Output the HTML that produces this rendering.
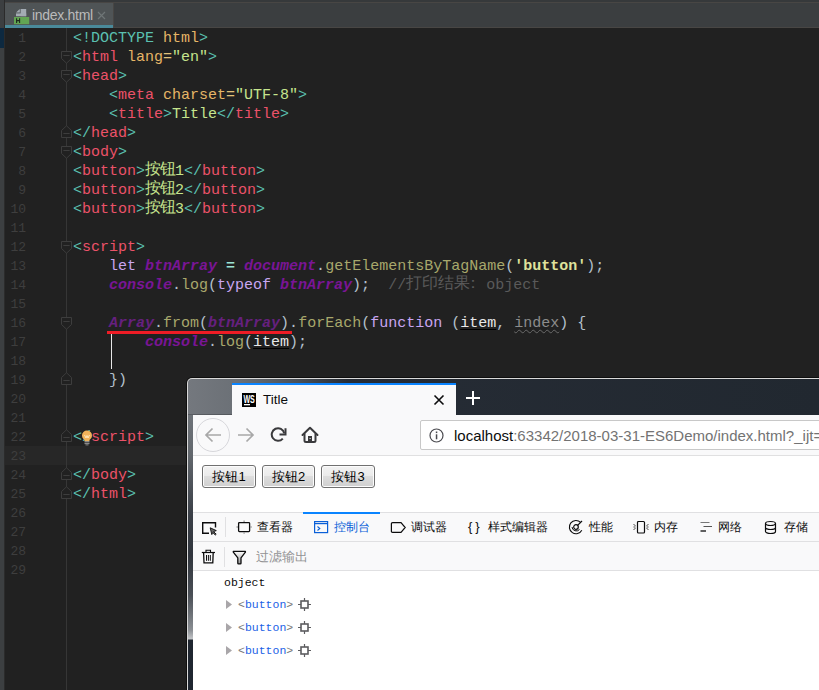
<!DOCTYPE html>
<html><head><meta charset="utf-8">
<style>
*{margin:0;padding:0;box-sizing:border-box}
html,body{width:819px;height:690px;overflow:hidden;background:#212121;font-family:"Liberation Sans",sans-serif;position:relative}
.abs{position:absolute}
#topbar{left:0;top:0;width:819px;height:28px;background:#3b3e40}
#topstrip{left:0;top:0;width:819px;height:2px;background:#36393b}
#topline{left:0;top:2px;width:819px;height:1px;background:#484644}
#tab{left:5px;top:3px;width:109px;height:25px;background:#4f5456;border-right:1px solid #484644}
#tabul{left:5px;top:25px;width:108px;height:3px;background:#4a8a9a}
#tabbot{left:114px;top:27px;width:705px;height:1px;background:#484644}
#tabtxt{left:32px;top:7px;font-size:14px;letter-spacing:-0.3px;color:#bbbbbb;line-height:17px}
#leftstrip{left:0;top:0;width:5px;height:690px;background:#3c3f41;border-right:1px solid #2b2b2b}
#leftblue{left:0;top:28px;width:4px;height:20px;background:#0d2940}
#curline{left:5px;top:446px;width:814px;height:19px;background:#272727}
#foldline{left:66px;top:28px;width:1px;height:662px;background:#363636}
.ln{position:absolute;left:5px;width:21px;text-align:right;font-family:"Liberation Mono",monospace;font-size:13px;color:#3e3e3e;line-height:19px}
.cl{position:absolute;left:73px;font-family:"Liberation Mono",monospace;font-size:15px;line-height:19px;white-space:pre;color:#c8d0d8}
.b{color:#5bc0b0}.t{color:#ec5269}.a{color:#e5b567}.v{color:#c6e58e}.e{color:#e2c27a}
.k{color:#c9a6f2}.g{color:#7a1596;font-weight:bold;font-style:italic}.g2{color:#66207f;font-weight:bold;font-style:italic}.m{color:#a8a86c}.p{color:#b4c0cc}
.s{color:#dfe39c;font-weight:bold}.c{color:#5a5a5a}.q{color:#9de4d4;font-weight:bold}
.it{color:#e8e8e8;text-decoration:underline;text-decoration-color:#000;text-underline-offset:2px}
.ix{color:#8c8c8c;text-decoration:underline wavy #6a6a6a;text-underline-offset:2px;text-decoration-thickness:1px}
.cj{display:inline-block;text-align:left;vertical-align:top;height:19px;line-height:19px;position:relative;top:-1px;font-size:15.5px}
/* browser */
#winblack{left:186px;top:377px;width:633px;height:313px;background:#0e0e0e;border-top-left-radius:6px}
#winwhite{left:187px;top:378px;width:632px;height:312px;background:#d9d9d9;border-top-left-radius:5px}
#title{left:188px;top:379px;width:631px;height:36px;background:linear-gradient(to right,#74787e 0px,#6b7076 50px,#4a5057 110px,#262c35 160px,#212830 100%);border-top-left-radius:4px}
#lframe{left:188px;top:415px;width:5px;height:275px;background:linear-gradient(to bottom,#6e7379 0px,#62676d 40px,#3a3f47 100px,#30353d 140px,#4a4f56 180px,#8a8e93 215px,#c3c5c8 224px,#1f2630 225px,#1f2630 100%)}
#btab{left:232px;top:383px;width:224px;height:32px;background:#f9f9fa;border-top:2px solid #0a84ff}
#nav{left:193px;top:415px;width:626px;height:41px;background:#f9f9fa;border-bottom:1px solid #e0e0e1}
#content{left:193px;top:456px;width:626px;height:234px;background:#ffffff}
#url{left:420px;top:420px;width:420px;height:30px;background:#fff;border:1px solid #c8c8c8;border-radius:2px}
.ubtn{position:absolute;top:465px;height:23px;border:1px solid #707070;border-radius:3px;box-shadow:inset 0 0 0 1px #fcfcfc;background:linear-gradient(to bottom,#f2f2f2 0%,#ebebeb 45%,#dddddd 50%,#cfcfcf 100%);font-size:13px;line-height:21px;text-align:center;color:#000}
#dtbar{left:193px;top:512px;width:626px;height:30px;background:#f9f9fa;border-top:1px solid #e0e0e2;border-bottom:1px solid #e0e0e2}
#fbar{left:193px;top:542px;width:626px;height:29px;background:#f9f9fa;border-bottom:1px solid #e0e0e2}
.dt{position:absolute;top:519px;font-size:12px;line-height:16px;color:#0c0c0d}
.mono{font-family:"Liberation Mono",monospace}
</style></head><body>
<div class="abs" id="topbar"></div>
<div class="abs" id="topstrip"></div>
<div class="abs" id="topline"></div>
<div class="abs" id="tab"></div>
<div class="abs" id="tabul"></div>
<div class="abs" id="tabbot"></div>
<svg class="abs" style="left:13px;top:8px" width="18" height="18" viewBox="0 0 18 18">
<path d="M3 4.6 L6.8 1 V4.6 Z" fill="#a3abb3"/><rect x="7.6" y="1" width="5.6" height="7.2" fill="#a3abb3"/><rect x="3" y="5.4" width="10.2" height="2.8" fill="#a3abb3"/>
<rect x="1" y="9" width="15.2" height="7.2" fill="#62a553"/>
<path d="M3.6 10.2 V15 M6.6 10.2 V15 M3.6 12.6 H6.6" stroke="#1f2a1e" stroke-width="1.1"/>
</svg>
<div class="abs" id="tabtxt">index.html</div>
<svg class="abs" style="left:97px;top:11px" width="9" height="9" viewBox="0 0 9 9"><path d="M1 1 L8 8 M8 1 L1 8" stroke="#6f7677" stroke-width="1.2"/></svg>
<div class="abs" id="leftstrip"></div>
<div class="abs" id="leftblue"></div>
<div class="abs" id="curline"></div>
<div class="abs" id="foldline"></div>
<div class="ln" style="top:29px">1</div>
<div class="ln" style="top:48px">2</div>
<div class="ln" style="top:67px">3</div>
<div class="ln" style="top:86px">4</div>
<div class="ln" style="top:105px">5</div>
<div class="ln" style="top:124px">6</div>
<div class="ln" style="top:143px">7</div>
<div class="ln" style="top:162px">8</div>
<div class="ln" style="top:181px">9</div>
<div class="ln" style="top:200px">10</div>
<div class="ln" style="top:219px">11</div>
<div class="ln" style="top:238px">12</div>
<div class="ln" style="top:257px">13</div>
<div class="ln" style="top:276px">14</div>
<div class="ln" style="top:295px">15</div>
<div class="ln" style="top:314px">16</div>
<div class="ln" style="top:333px">17</div>
<div class="ln" style="top:352px">18</div>
<div class="ln" style="top:371px">19</div>
<div class="ln" style="top:390px">20</div>
<div class="ln" style="top:409px">21</div>
<div class="ln" style="top:428px">22</div>
<div class="ln" style="top:447px">23</div>
<div class="ln" style="top:466px">24</div>
<div class="ln" style="top:485px">25</div>
<div class="ln" style="top:504px">26</div>
<div class="ln" style="top:523px">27</div>
<div class="ln" style="top:542px">28</div>
<div class="ln" style="top:561px">29</div>
<svg class="abs" style="left:61px;top:51px" width="11" height="13" viewBox="0 0 11 13"><path d="M0.5 0.5 H10.5 V7.5 L5.5 12.2 L0.5 7.5 Z" fill="#212121" stroke="#3d3d3d"/><path d="M2.3 4.5 H8.7" stroke="#3d3d3d"/></svg>
<svg class="abs" style="left:61px;top:70px" width="11" height="13" viewBox="0 0 11 13"><path d="M0.5 0.5 H10.5 V7.5 L5.5 12.2 L0.5 7.5 Z" fill="#212121" stroke="#3d3d3d"/><path d="M2.3 4.5 H8.7" stroke="#3d3d3d"/></svg>
<svg class="abs" style="left:61px;top:146px" width="11" height="13" viewBox="0 0 11 13"><path d="M0.5 0.5 H10.5 V7.5 L5.5 12.2 L0.5 7.5 Z" fill="#212121" stroke="#3d3d3d"/><path d="M2.3 4.5 H8.7" stroke="#3d3d3d"/></svg>
<svg class="abs" style="left:61px;top:241px" width="11" height="13" viewBox="0 0 11 13"><path d="M0.5 0.5 H10.5 V7.5 L5.5 12.2 L0.5 7.5 Z" fill="#212121" stroke="#3d3d3d"/><path d="M2.3 4.5 H8.7" stroke="#3d3d3d"/></svg>
<svg class="abs" style="left:61px;top:317px" width="11" height="13" viewBox="0 0 11 13"><path d="M0.5 0.5 H10.5 V7.5 L5.5 12.2 L0.5 7.5 Z" fill="#212121" stroke="#3d3d3d"/><path d="M2.3 4.5 H8.7" stroke="#3d3d3d"/></svg>
<svg class="abs" style="left:61px;top:125px" width="11" height="13" viewBox="0 0 11 13"><path d="M0.5 12.5 H10.5 V5.5 L5.5 0.8 L0.5 5.5 Z" fill="#212121" stroke="#3d3d3d"/><path d="M2.3 8.5 H8.7" stroke="#3d3d3d"/></svg>
<svg class="abs" style="left:61px;top:372px" width="11" height="13" viewBox="0 0 11 13"><path d="M0.5 12.5 H10.5 V5.5 L5.5 0.8 L0.5 5.5 Z" fill="#212121" stroke="#3d3d3d"/><path d="M2.3 8.5 H8.7" stroke="#3d3d3d"/></svg>
<svg class="abs" style="left:61px;top:429px" width="11" height="13" viewBox="0 0 11 13"><path d="M0.5 12.5 H10.5 V5.5 L5.5 0.8 L0.5 5.5 Z" fill="#212121" stroke="#3d3d3d"/><path d="M2.3 8.5 H8.7" stroke="#3d3d3d"/></svg>
<svg class="abs" style="left:61px;top:467px" width="11" height="13" viewBox="0 0 11 13"><path d="M0.5 12.5 H10.5 V5.5 L5.5 0.8 L0.5 5.5 Z" fill="#212121" stroke="#3d3d3d"/><path d="M2.3 8.5 H8.7" stroke="#3d3d3d"/></svg>
<svg class="abs" style="left:61px;top:486px" width="11" height="13" viewBox="0 0 11 13"><path d="M0.5 12.5 H10.5 V5.5 L5.5 0.8 L0.5 5.5 Z" fill="#212121" stroke="#3d3d3d"/><path d="M2.3 8.5 H8.7" stroke="#3d3d3d"/></svg>
<div class="cl" style="top:29px"><span class="b">&lt;</span><span class="b">!DOCTYPE</span><span class="a"> html</span><span class="b">&gt;</span></div>
<div class="cl" style="top:48px"><span class="b">&lt;</span><span class="t">html</span><span class="a"> lang</span><span class="e">=</span><span class="v">"en"</span><span class="b">&gt;</span></div>
<div class="cl" style="top:67px"><span class="b">&lt;</span><span class="t">head</span><span class="b">&gt;</span></div>
<div class="cl" style="top:86px">    <span class="b">&lt;</span><span class="t">meta</span><span class="a"> charset</span><span class="e">=</span><span class="v">"UTF-8"</span><span class="b">&gt;</span></div>
<div class="cl" style="top:105px">    <span class="b">&lt;</span><span class="t">title</span><span class="b">&gt;</span><span class="v">Title</span><span class="b">&lt;/</span><span class="t">title</span><span class="b">&gt;</span></div>
<div class="cl" style="top:124px"><span class="b">&lt;/</span><span class="t">head</span><span class="b">&gt;</span></div>
<div class="cl" style="top:143px"><span class="b">&lt;</span><span class="t">body</span><span class="b">&gt;</span></div>
<div class="cl" style="top:162px"><span class="b">&lt;</span><span class="t">button</span><span class="b">&gt;</span><span class="cj v" style="width:15px">按</span><span class="cj v" style="width:15px">钮</span><span class="v">1</span><span class="b">&lt;/</span><span class="t">button</span><span class="b">&gt;</span></div>
<div class="cl" style="top:181px"><span class="b">&lt;</span><span class="t">button</span><span class="b">&gt;</span><span class="cj v" style="width:15px">按</span><span class="cj v" style="width:15px">钮</span><span class="v">2</span><span class="b">&lt;/</span><span class="t">button</span><span class="b">&gt;</span></div>
<div class="cl" style="top:200px"><span class="b">&lt;</span><span class="t">button</span><span class="b">&gt;</span><span class="cj v" style="width:15px">按</span><span class="cj v" style="width:15px">钮</span><span class="v">3</span><span class="b">&lt;/</span><span class="t">button</span><span class="b">&gt;</span></div>
<div class="cl" style="top:238px"><span class="b">&lt;</span><span class="t">script</span><span class="b">&gt;</span></div>
<div class="cl" style="top:257px">    <span class="k">let </span><span class="g">btnArray</span> <span class="q">=</span> <span class="g">document</span><span class="p">.</span><span class="m">getElementsByTagName</span><span class="p">(</span><span class="s">'button'</span><span class="p">);</span></div>
<div class="cl" style="top:276px">    <span class="g">console</span><span class="p">.</span><span class="m">log</span><span class="p">(</span><span class="k">typeof </span><span class="g">btnArray</span><span class="p">);</span>  <span class="c">//</span><span class="cj c" style="width:16px">打</span><span class="cj c" style="width:16px">印</span><span class="cj c" style="width:16px">结</span><span class="cj c" style="width:16px">果</span><span class="cj c" style="width:16px;left:-5px">：</span><span class="c">object</span></div>
<div class="cl" style="top:314px">    <span class="g2">Array</span><span class="p">.</span><span class="m">from</span><span class="p">(</span><span class="g2">btnArray</span><span class="p">)</span><span class="p">.</span><span class="m">forEach</span><span class="p">(</span><span class="k">function</span> <span class="p">(</span><span class="it">item</span><span class="p">, </span><span class="ix">index</span><span class="p">) {</span></div>
<div class="cl" style="top:333px">        <span class="g">console</span><span class="p">.</span><span class="m">log</span><span class="p">(</span><span class="it">item</span><span class="p">);</span></div>
<div class="cl" style="top:371px">    <span class="p">})</span></div>
<div class="cl" style="top:428px"><span class="b">&lt;</span><span class="b">/</span><span class="t">script</span><span class="b">&gt;</span></div>
<div class="cl" style="top:466px"><span class="b">&lt;/</span><span class="t">body</span><span class="b">&gt;</span></div>
<div class="cl" style="top:485px"><span class="b">&lt;/</span><span class="t">html</span><span class="b">&gt;</span></div>
<!-- red underline + caret line -->
<div class="abs" style="left:107px;top:331px;width:185px;height:3px;background:#ee1c25"></div>
<div class="abs" style="left:111px;top:334px;width:1px;height:35px;background:#e8e8e8"></div>
<!-- bulb -->
<svg class="abs" style="left:81px;top:430px" width="12" height="16" viewBox="0 0 12 16">
<circle cx="6" cy="5.5" r="5" fill="#f0b35a"/><rect x="3.5" y="9" width="5" height="2" fill="#f0b35a"/>
<path d="M3.5 5 L5 8 L6 5.5 L7 8 L8.5 5" stroke="#fff3d0" stroke-width="0.8" fill="none"/>
<rect x="3.5" y="11" width="5" height="1.3" fill="#8a8a8a"/><rect x="3.5" y="12.8" width="5" height="1.3" fill="#8a8a8a"/><rect x="4.5" y="14.4" width="3" height="1" fill="#8a8a8a"/>
</svg>
<!-- browser window -->
<div class="abs" id="winblack"></div>
<div class="abs" id="winwhite"></div>
<div class="abs" id="title"></div>
<div class="abs" id="lframe"></div>
<div class="abs" style="left:188px;top:414px;width:44px;height:1px;background:rgba(0,0,0,0.22)"></div>
<div class="abs" id="btab"></div>
<svg class="abs" style="left:242px;top:393px" width="14" height="14" viewBox="0 0 14 14"><rect width="14" height="14" fill="#000"/>
<text x="1.4" y="9.6" font-family="Liberation Sans" font-weight="bold" font-size="11" fill="#fff" textLength="11.4" lengthAdjust="spacingAndGlyphs">WS</text><rect x="2" y="11" width="6" height="1.3" fill="#fff"/></svg>
<div class="abs" style="left:263px;top:392px;font-size:13.5px;line-height:16px;color:#0c0c0d">Title</div>
<svg class="abs" style="left:433px;top:394px" width="12" height="12" viewBox="0 0 12 12"><path d="M1.5 1.5 L10.5 10.5 M10.5 1.5 L1.5 10.5" stroke="#0c0c0d" stroke-width="1.6"/></svg>
<svg class="abs" style="left:465px;top:390px" width="16" height="16" viewBox="0 0 16 16"><path d="M8 1 V15 M1 8 H15" stroke="#fff" stroke-width="2"/></svg>
<div class="abs" id="nav"></div>
<div class="abs" style="left:196px;top:418px;width:34px;height:34px;border:1px solid #d7d7db;border-radius:50%;background:#f9f9fa"></div>
<svg class="abs" style="left:204px;top:427px" width="18" height="16" viewBox="0 0 18 16"><path d="M17 8 H2 M8.5 1.5 L2 8 L8.5 14.5" stroke="#a8a8a8" stroke-width="1.7" fill="none"/></svg>
<svg class="abs" style="left:237px;top:427px" width="18" height="16" viewBox="0 0 18 16"><path d="M1 8 H16 M9.5 1.5 L16 8 L9.5 14.5" stroke="#a8a8a8" stroke-width="1.7" fill="none"/></svg>
<svg class="abs" style="left:270px;top:427px" width="17" height="16" viewBox="0 0 17 16"><path d="M12.8 11.6 A6.3 6.3 0 1 1 14.2 6.2" stroke="#3a3a3c" stroke-width="2" fill="none"/><path d="M15.5 1.2 V7.5 H9.5" stroke="#3a3a3c" stroke-width="2" fill="none"/></svg>
<svg class="abs" style="left:301px;top:426px" width="18" height="18" viewBox="0 0 18 18"><path d="M1.5 9 L9 1.8 L16.5 9" stroke="#3a3a3c" stroke-width="2" fill="none" stroke-linejoin="round" stroke-linecap="round"/><path d="M3.5 7.5 V14.5 Q3.5 16 5 16 H13 Q14.5 16 14.5 14.5 V7.5" stroke="#3a3a3c" stroke-width="2" fill="none"/><rect x="7" y="10" width="4" height="6" fill="#3a3a3c"/><rect x="8.6" y="12" width="1" height="1" fill="#fff"/></svg>
<div class="abs" id="url"></div>
<svg class="abs" style="left:429px;top:428px" width="15" height="15" viewBox="0 0 15 15"><circle cx="7.5" cy="7.5" r="6.5" stroke="#4a4a4f" stroke-width="1.2" fill="none"/><rect x="6.8" y="6.3" width="1.5" height="5" fill="#4a4a4f"/><rect x="6.8" y="3.5" width="1.5" height="1.6" fill="#4a4a4f"/></svg>
<div class="abs" style="left:454px;top:427px;font-size:15px;line-height:18px;color:#0c0c0d;white-space:pre">localhost<span style="color:#737373">:63342/2018-03-31-ES6Demo/index.html?_ijt=</span></div>
<div class="abs" id="content"></div>
<div class="ubtn" style="left:202px;width:54px">按钮1</div>
<div class="ubtn" style="left:262px;width:53px">按钮2</div>
<div class="ubtn" style="left:321px;width:54px">按钮3</div>
<div class="abs" id="dtbar"></div>
<div class="abs" id="fbar"></div>
<svg class="abs" style="left:201px;top:521px" width="17" height="15" viewBox="0 0 17 15"><path d="M8 12.2 H1.7 V1.7 H14.5 V6.5" stroke="#0c0c0d" stroke-width="1.4" fill="none"/><path d="M9.2 6.8 L15.3 9.6 L12.6 10.6 L15.2 13.2 L14.3 14 L11.7 11.5 L10.8 13.6 Z" fill="#6a6a6a" stroke="#0c0c0d" stroke-width="0.9" stroke-linejoin="round"/></svg>
<div class="abs" style="left:225px;top:517px;width:1px;height:20px;background:#e0e0e2"></div>
<svg class="abs" style="left:235px;top:520px" width="17" height="15" viewBox="0 0 17 15"><rect x="3.6" y="2.6" width="11" height="9" rx="0.8" stroke="#0c0c0d" stroke-width="1.3" fill="none"/><path d="M1.5 7 H3 M15.2 7 H16.7 M9.1 0.5 V2 M9.1 12.2 V13.7" stroke="#9a9a9a" stroke-width="1.3"/></svg>
<div class="dt" style="left:257px">查看器</div>
<div class="abs" style="left:303px;top:512px;width:77px;height:2px;background:#0a84ff"></div>
<svg class="abs" style="left:313px;top:520px" width="16" height="14" viewBox="0 0 16 14"><rect x="1.6" y="1.6" width="13" height="11" stroke="#0a60d8" stroke-width="1.2" fill="none"/><path d="M1.6 3.6 H14.6" stroke="#0a60d8" stroke-width="1.2"/><path d="M4.5 6.5 L6.8 8.5 L4.5 10.5" stroke="#0a60d8" stroke-width="1.1" fill="none"/></svg>
<div class="dt" style="left:334px;color:#0a60d8">控制台</div>
<svg class="abs" style="left:390px;top:521px" width="17" height="13" viewBox="0 0 17 13"><path d="M2.6 1.6 H11 L15.2 6.5 L11 11.4 H2.6 Q1.4 11.4 1.4 10.2 V2.8 Q1.4 1.6 2.6 1.6 Z" stroke="#0c0c0d" stroke-width="1.2" fill="none"/></svg>
<div class="dt" style="left:411px">调试器</div>
<div class="dt" style="left:468px;font-size:13px;letter-spacing:3px">{}</div>
<div class="dt" style="left:488px">样式编辑器</div>
<svg class="abs" style="left:568px;top:519px" width="16" height="16" viewBox="0 0 16 16"><path d="M13.8 11.2 A6.6 6.6 0 1 1 12.6 3.4" stroke="#0c0c0d" stroke-width="1.1" fill="none"/><path d="M11.5 10.5 A4.3 4.3 0 0 1 4 8" stroke="#0c0c0d" stroke-width="1" fill="none"/><circle cx="8" cy="8" r="2.3" stroke="#0c0c0d" stroke-width="1.2" fill="none"/><path d="M9.6 6.4 L14 2" stroke="#0c0c0d" stroke-width="1.2"/></svg>
<div class="dt" style="left:589px">性能</div>
<svg class="abs" style="left:633px;top:520px" width="16" height="14" viewBox="0 0 16 14"><rect x="4.5" y="1.5" width="7" height="11.5" rx="1" stroke="#0c0c0d" stroke-width="1.2" fill="none"/><path d="M0.5 4.5 L2.5 5.5 M0.5 7 H2.5 M0.5 9.5 L2.5 8.5 M13.5 5.5 L15.5 4.5 M13.5 7 H15.5 M13.5 8.5 L15.5 9.5" stroke="#333" stroke-width="0.9"/></svg>
<div class="dt" style="left:654px">内存</div>
<svg class="abs" style="left:699px;top:520px" width="15" height="14" viewBox="0 0 15 14"><path d="M1.5 2.5 H10.5" stroke="#777" stroke-width="1"/><path d="M4.5 6.5 H13" stroke="#555" stroke-width="1"/><path d="M1.5 11 H7" stroke="#0c0c0d" stroke-width="1.3"/></svg>
<div class="dt" style="left:718px">网络</div>
<svg class="abs" style="left:764px;top:520px" width="14" height="15" viewBox="0 0 14 15"><ellipse cx="6.5" cy="3.5" rx="5" ry="2" stroke="#0c0c0d" stroke-width="1.2" fill="none"/><path d="M1.5 3.5 V11.5 A5 2 0 0 0 11.5 11.5 V3.5 M1.5 7.5 A5 2 0 0 0 11.5 7.5" stroke="#0c0c0d" stroke-width="1.2" fill="none"/></svg>
<div class="dt" style="left:784px">存储</div>
<svg class="abs" style="left:201px;top:549px" width="15" height="16" viewBox="0 0 15 16"><path d="M0.8 3.5 H14" stroke="#0c0c0d" stroke-width="1.2"/><path d="M5 3.3 V1.2 H9.5 V3.3" stroke="#0c0c0d" stroke-width="1.1" fill="none"/><path d="M2.6 3.5 L3 13.8 H11.8 L12.2 3.5" stroke="#0c0c0d" stroke-width="1.3" fill="none"/><path d="M5.5 6 V11.8 M7.4 6 V11.8 M9.3 6 V11.8" stroke="#0c0c0d" stroke-width="1"/></svg>
<div class="abs" style="left:224px;top:547px;width:1px;height:20px;background:#e0e0e2"></div>
<svg class="abs" style="left:232px;top:550px" width="15" height="16" viewBox="0 0 15 16"><defs><linearGradient id="fg" x1="0" y1="0" x2="0" y2="1"><stop offset="0" stop-color="#fff"/><stop offset="1" stop-color="#999"/></linearGradient></defs><path d="M1.3 1.3 H13.4 V2.2 L9 7.8 V13.2 Q9 13.9 8.3 13.9 H6.5 Q5.8 13.9 5.8 13.2 V7.8 L1.3 2.2 Z" fill="url(#fg)" stroke="#0c0c0d" stroke-width="1.3" stroke-linejoin="round"/></svg>
<div class="abs" style="left:256px;top:548px;font-size:13px;line-height:17px;color:#939395">过滤输出</div>
<div class="abs mono" style="left:224px;top:576px;font-size:11.5px;line-height:14px;color:#0c0c0d">object</div>
<svg class="abs" style="left:226px;top:600px" width="6" height="9" viewBox="0 0 6 9"><path d="M0 0 L6 4.5 L0 9 Z" fill="#a9a6a9"/></svg>
<div class="abs mono" style="left:238px;top:598px;font-size:11.5px;line-height:14px;color:#1c62e6"><span style="color:#767676">&lt;</span>button<span style="color:#767676">&gt;</span></div>
<svg class="abs" style="left:298px;top:598px" width="13" height="13" viewBox="0 0 13 13"><rect x="3" y="3" width="7" height="7" stroke="#5c5c5f" stroke-width="1.6" fill="none"/><path d="M0 6.5 H3 M10 6.5 H13 M6.5 0 V3 M6.5 10 V13" stroke="#5c5c5f" stroke-width="1.2"/></svg>
<svg class="abs" style="left:226px;top:623px" width="6" height="9" viewBox="0 0 6 9"><path d="M0 0 L6 4.5 L0 9 Z" fill="#a9a6a9"/></svg>
<div class="abs mono" style="left:238px;top:621px;font-size:11.5px;line-height:14px;color:#1c62e6"><span style="color:#767676">&lt;</span>button<span style="color:#767676">&gt;</span></div>
<svg class="abs" style="left:298px;top:621px" width="13" height="13" viewBox="0 0 13 13"><rect x="3" y="3" width="7" height="7" stroke="#5c5c5f" stroke-width="1.6" fill="none"/><path d="M0 6.5 H3 M10 6.5 H13 M6.5 0 V3 M6.5 10 V13" stroke="#5c5c5f" stroke-width="1.2"/></svg>
<svg class="abs" style="left:226px;top:646px" width="6" height="9" viewBox="0 0 6 9"><path d="M0 0 L6 4.5 L0 9 Z" fill="#a9a6a9"/></svg>
<div class="abs mono" style="left:238px;top:644px;font-size:11.5px;line-height:14px;color:#1c62e6"><span style="color:#767676">&lt;</span>button<span style="color:#767676">&gt;</span></div>
<svg class="abs" style="left:298px;top:644px" width="13" height="13" viewBox="0 0 13 13"><rect x="3" y="3" width="7" height="7" stroke="#5c5c5f" stroke-width="1.6" fill="none"/><path d="M0 6.5 H3 M10 6.5 H13 M6.5 0 V3 M6.5 10 V13" stroke="#5c5c5f" stroke-width="1.2"/></svg>

</body></html>
